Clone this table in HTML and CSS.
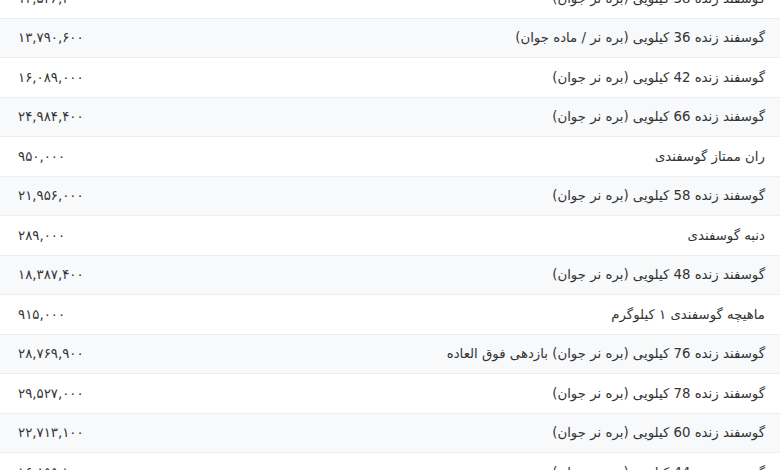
FILE: index.html
```html
<!DOCTYPE html>
<html lang="fa" dir="rtl">
<head>
  <meta charset="UTF-8" />
  <meta name="viewport" content="width=device-width, initial-scale=1" />
  <title>قیمت گوسفند زنده</title>
  <link rel="stylesheet" href="styles.css">
</head>
<body>
  <table class="price-table">
    <tbody>
      <tr><td class="name">گوسفند زنده 38 کیلویی (بره نر جوان)</td><td class="price">۱۴,۵۲۶,۴۰۰</td></tr>
      <tr><td class="name">گوسفند زنده 36 کیلویی (بره نر / ماده جوان)</td><td class="price">۱۳,۷۹۰,۶۰۰</td></tr>
      <tr><td class="name">گوسفند زنده 42 کیلویی (بره نر جوان)</td><td class="price">۱۶,۰۸۹,۰۰۰</td></tr>
      <tr><td class="name">گوسفند زنده 66 کیلویی (بره نر جوان)</td><td class="price">۲۴,۹۸۴,۴۰۰</td></tr>
      <tr><td class="name">ران ممتاز گوسفندی</td><td class="price">۹۵۰,۰۰۰</td></tr>
      <tr><td class="name">گوسفند زنده 58 کیلویی (بره نر جوان)</td><td class="price">۲۱,۹۵۶,۰۰۰</td></tr>
      <tr><td class="name">دنبه گوسفندی</td><td class="price">۲۸۹,۰۰۰</td></tr>
      <tr><td class="name">گوسفند زنده 48 کیلویی (بره نر جوان)</td><td class="price">۱۸,۳۸۷,۴۰۰</td></tr>
      <tr><td class="name">ماهیچه گوسفندی ۱ کیلوگرم</td><td class="price">۹۱۵,۰۰۰</td></tr>
      <tr><td class="name">گوسفند زنده 76 کیلویی (بره نر جوان) بازدهی فوق العاده</td><td class="price">۲۸,۷۶۹,۹۰۰</td></tr>
      <tr><td class="name">گوسفند زنده 78 کیلویی (بره نر جوان)</td><td class="price">۲۹,۵۲۷,۰۰۰</td></tr>
      <tr><td class="name">گوسفند زنده 60 کیلویی (بره نر جوان)</td><td class="price">۲۲,۷۱۳,۱۰۰</td></tr>
      <tr><td class="name">گوسفند زنده 44 کیلویی (بره نر جوان)</td><td class="price">۱۶,۸۵۵,۱۰۰</td></tr>
    </tbody>
  </table>
</body>
</html>
```

FILE: styles.css
```css
* {
  box-sizing: border-box;
}
body {
  margin: 0;
  background: #fff;
  font-family: "DejaVu Sans", sans-serif;
  color: #333;
  overflow: hidden;
}
.price-table {
  width: 100%;
  border-collapse: collapse;
  margin-top: -21.5px;
}
.price-table tr {
  height: 39.5px;
  border-bottom: 1px solid #eceef1;
}
.price-table tr:nth-child(even) {
  background: #f8f9fb;
}
.price-table td {
  padding: 0 15px 0 18px;
  font-size: 13.3px;
  vertical-align: middle;
}
.name {
  text-align: right;
}
.price {
  text-align: left;
  width: 200px;
}
```
